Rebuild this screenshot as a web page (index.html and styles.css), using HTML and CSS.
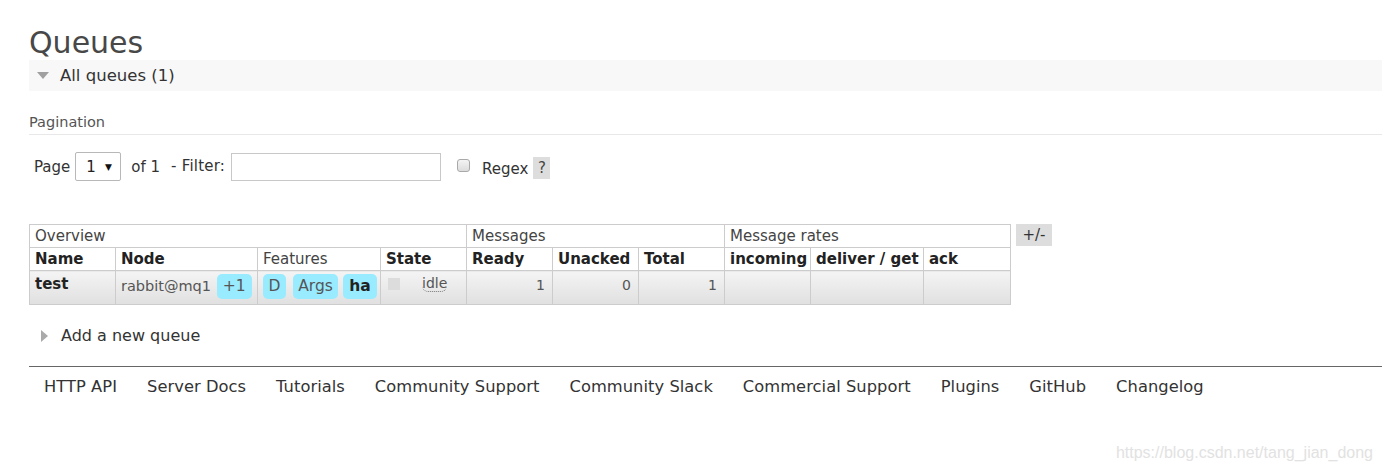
FILE: index.html
```html
<!DOCTYPE html>
<html>
<head>
<meta charset="utf-8">
<title>Queues</title>
<link rel="stylesheet" href="styles.css">
</head>
<body>
<div class="main">
  <h1 class="title">Queues</h1>
  <div class="section-head">
    <span class="tri-down"></span>
    <span class="section-label">All queues (1)</span>
  </div>

  <div class="pag-title">Pagination</div>
  <div class="pag-row">
    <span class="lbl lbl-page">Page</span>
    <span class="select-box"><span class="sel-val">1</span><span class="sel-arrow">▼</span></span>
    <span class="lbl lbl-of">of 1</span>
    <span class="lbl lbl-filter">- Filter:</span>
    <input class="filter-input" type="text">
    <input class="check" type="checkbox">
    <span class="lbl lbl-regex">Regex</span>
    <span class="help">?</span>
  </div>

  <div class="table-wrap">
    <table class="list">
      <colgroup>
        <col class="w86"><col class="w142"><col class="w123"><col class="w86">
        <col class="w86"><col class="w86"><col class="w86">
        <col class="w86"><col class="w113"><col class="w87">
      </colgroup>
      <thead>
        <tr class="group-row">
          <th colspan="4">Overview</th>
          <th colspan="3">Messages</th>
          <th colspan="3">Message rates</th>
        </tr>
        <tr class="head-row">
          <th>Name</th>
          <th>Node</th>
          <th class="plain">Features</th>
          <th>State</th>
          <th>Ready</th>
          <th>Unacked</th>
          <th>Total</th>
          <th>incoming</th>
          <th>deliver / get</th>
          <th>ack</th>
        </tr>
      </thead>
      <tbody>
        <tr class="data-row">
          <td class="name">test</td>
          <td class="node">rabbit@mq1 <span class="badge first">+1</span></td>
          <td class="features"><span class="badge">D</span> <span class="badge args">Args</span> <span class="badge strong">ha</span></td>
          <td class="state"><span class="state-sq"></span><abbr class="idle">idle</abbr></td>
          <td class="num">1</td>
          <td class="num">0</td>
          <td class="num">1</td>
          <td></td>
          <td></td>
          <td></td>
        </tr>
      </tbody>
    </table>
    <span class="toggle-cols">+/-</span>
  </div>

  <div class="section-hidden">
    <span class="tri-right"></span>
    <span class="section-label2">Add a new queue</span>
  </div>

  <hr class="rule">

  <ul class="footer">
    <li>HTTP API</li>
    <li>Server Docs</li>
    <li>Tutorials</li>
    <li>Community Support</li>
    <li>Community Slack</li>
    <li>Commercial Support</li>
    <li>Plugins</li>
    <li>GitHub</li>
    <li>Changelog</li>
  </ul>
</div>
<div class="watermark">https://blog.csdn.net/tang_jian_dong</div>
</body>
</html>
```

FILE: styles.css
```css
html, body {
  margin: 0;
  padding: 0;
  background: #fff;
}
body {
  font-family: "DejaVu Sans", Verdana, sans-serif;
  color: #484848;
  font-size: 14px;
  width: 1382px;
  height: 471px;
  overflow: hidden;
  position: relative;
}
.main {
  padding-left: 29px;
}
.title {
  margin: 0;
  padding-top: 25px;
  height: 35px;
  font-size: 30px;
  font-weight: normal;
  line-height: 35px;
  color: #484848;
}
.section-head {
  height: 31px;
  background: #f8f8f8;
  display: flex;
  align-items: center;
}
.tri-down {
  width: 0;
  height: 0;
  margin-left: 8px;
  border-left: 6.5px solid transparent;
  border-right: 6.5px solid transparent;
  border-top: 7px solid #a0a0a0;
}
.section-label {
  margin-left: 11px;
  font-size: 16.5px;
  color: #333;
}
.pag-title {
  margin-top: 21px;
  line-height: 20px;
  padding-bottom: 2px;
  border-bottom: 1px solid #e8e8e8;
  font-size: 14.5px;
  color: #555;
}
.pag-row {
  margin-top: 17px;
  height: 29px;
  display: flex;
  align-items: center;
  font-size: 15px;
  color: #333;
}
.lbl-page { margin-left: 5px; }
.select-box {
  margin-left: 5px;
  width: 46px;
  height: 29px;
  box-sizing: border-box;
  border: 1px solid #b8b8b8;
  border-radius: 2px;
  display: flex;
  align-items: center;
  background: #fff;
}
.sel-val {
  margin-left: 10px;
  color: #222;
}
.sel-arrow {
  margin-left: 9px;
  font-size: 9px;
  color: #111;
}
.lbl-of { margin-left: 10px; }
.lbl-filter { margin-left: 11px; margin-top: -2px; letter-spacing: 0.2px; }
.filter-input {
  margin: 0 0 0 6px;
  width: 210px;
  height: 28px;
  box-sizing: border-box;
  border: 1px solid #c8c8c8;
  padding: 0;
  background: #fff;
}
.check {
  appearance: none;
  -webkit-appearance: none;
  margin: 0 0 0 16px;
  width: 13px;
  height: 13px;
  box-sizing: border-box;
  border: 1px solid #a9a9a9;
  border-radius: 3px;
  background: linear-gradient(#f4f4f4, #dcdcdc);
  position: relative;
  top: -1px;
}
.lbl-regex { margin-left: 12px; margin-top: 5px; }
.help {
  margin-left: 5px;
  width: 17px;
  height: 22px;
  background: #dddddd;
  display: flex;
  align-items: center;
  justify-content: center;
  color: #444;
  font-size: 15px;
  margin-top: 3px;
}
.table-wrap {
  margin-top: 43px;
  display: flex;
  align-items: flex-start;
}
.list {
  border-collapse: collapse;
  table-layout: fixed;
  width: 981px;
  font-size: 15px;
}
.w86 { width: 86px; }
.w87 { width: 87px; }
.w113 { width: 113px; }
.w123 { width: 123px; }
.w142 { width: 142px; }
.list th, .list td {
  border: 1px solid #cccccc;
  text-align: left;
  padding: 0 5px;
  white-space: nowrap;
  overflow: hidden;
}
.group-row th {
  height: 22px;
  line-height: 21px;
  font-weight: normal;
  color: #444;
}
.head-row th {
  height: 22px;
  line-height: 22px;
  font-weight: bold;
  color: #222;
}
.head-row th.plain {
  font-weight: normal;
  color: #444;
}
.data-row td {
  height: 34px;
  box-sizing: border-box;
  vertical-align: top;
  padding-top: 3px;
  line-height: 18px;
  background: linear-gradient(#f4f4f4, #e0e0e0);
  color: #555;
}
.data-row td.name {
  font-weight: bold;
  color: #222;
  padding-top: 4px;
}
.data-row td.node {
  font-size: 14.5px;
}
.data-row td.num {
  text-align: right;
  padding-right: 7px;
  padding-top: 5px;
  color: #555;
  font-size: 14px;
}
.badge {
  display: inline-block;
  height: 25px;
  line-height: 25px;
  padding: 0 5.5px;
  border-radius: 5px;
  background: #99ebff;
  color: #555;
  font-size: 15.5px;
}
.badge.first {
  margin-left: 1px;
  padding: 0 6px;
}
.badge.args {
  margin-left: 2px;
}
.badge.strong {
  font-weight: bold;
  color: #222;
  padding: 0 6px;
}
.data-row td.state {
  padding-left: 7px;
  padding-top: 7px;
}
.state-sq {
  display: inline-block;
  width: 12px;
  height: 12px;
  background: #dcdcdc;
  vertical-align: top;
  margin-top: 0;
}
.idle {
  display: inline-block;
  vertical-align: top;
  margin-left: 22px;
  text-decoration: none;
  font-size: 14px;
  line-height: 15px;
  border-bottom: 1px dotted #777;
  border-radius: 0 0 6px 6px;
  color: #555;
  margin-top: -2px;
}
.toggle-cols {
  margin-left: 5px;
  width: 36px;
  height: 22px;
  background: #dddddd;
  display: flex;
  align-items: center;
  justify-content: center;
  font-size: 15px;
  color: #333;
}
.section-hidden {
  margin-top: 15px;
  height: 31px;
  display: flex;
  align-items: center;
}
.tri-right {
  width: 0;
  height: 0;
  margin-left: 12px;
  border-top: 6.5px solid transparent;
  border-bottom: 6.5px solid transparent;
  border-left: 7px solid #aaaaaa;
}
.section-label2 {
  margin-left: 13px;
  font-size: 16px;
  color: #333;
}
.rule {
  margin: 15px 0 0 0;
  border: 0;
  border-top: 1px solid #666;
  height: 0;
}
.footer {
  list-style: none;
  margin: 0;
  padding: 10px 0 0 15px;
  display: flex;
  gap: 30px;
  font-size: 16.3px;
  letter-spacing: 0.05px;
  line-height: 20px;
  color: #333;
}
.footer li {
  white-space: nowrap;
}
.watermark {
  position: absolute;
  right: 9px;
  bottom: 9px;
  font-family: "Liberation Sans", Arial, sans-serif;
  font-size: 16px;
  color: #e2e2e2;
}
```
